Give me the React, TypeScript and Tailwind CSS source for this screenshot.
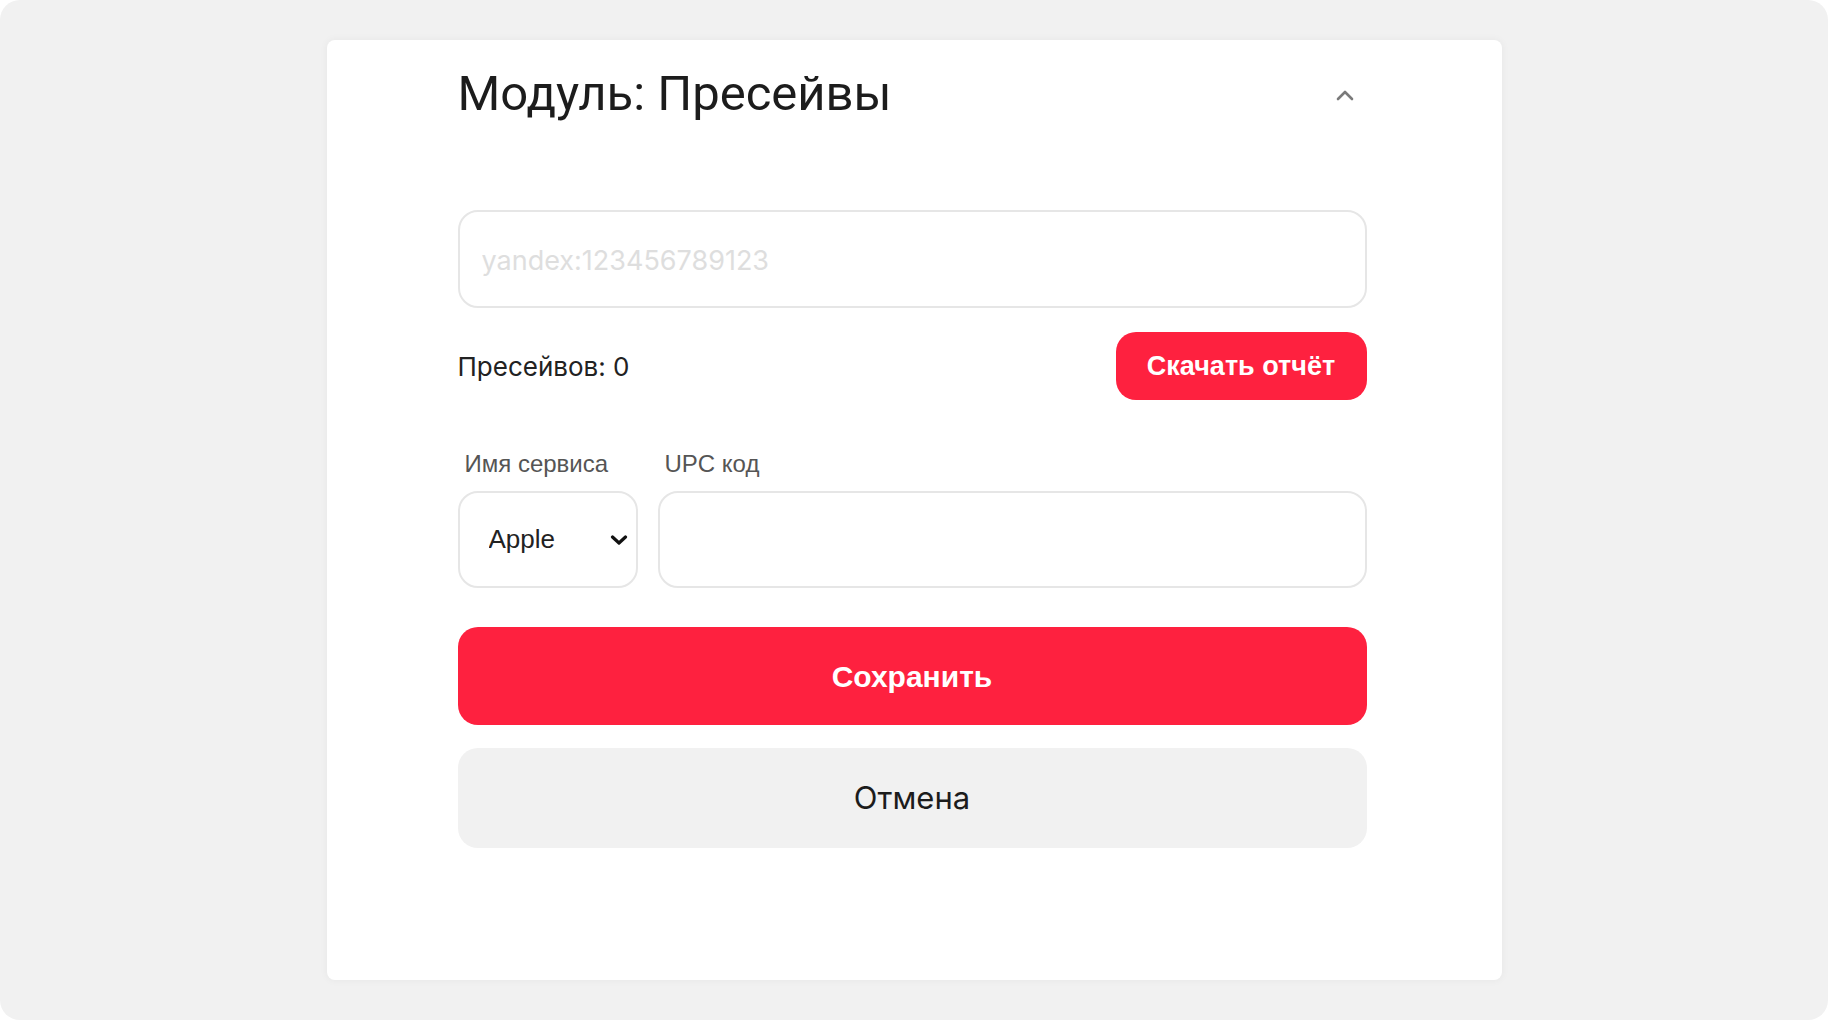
import { useState } from "react";

const inter = "font-['Inter',sans-serif]";
const arial = "font-['Liberation_Sans',Arial,sans-serif]";

export default function App() {
    const [service, setService] = useState("apple");
    const [link, setLink] = useState("");
    const [upc, setUpc] = useState("");

    return (
        <div className="h-[1020px] w-full bg-white">
            <div className="h-full w-full rounded-[20px] bg-[#f1f1f1] pt-[40px]">
                {/* Module card */}
                <div className="mx-auto h-[940px] w-[1175px] rounded-lg bg-white pt-[25px] shadow-[0_0_8px_rgba(0,0,0,0.05)]">
                    <div className="ml-[131px] flex w-[909px] flex-col">
                        <div className="flex items-center justify-between">
                            <h1 className="font-['Roboto',sans-serif] text-[49px] leading-[58px] font-normal text-[#1c1c1c]">
                                Модуль: Пресейвы
                            </h1>
                            <button className="mr-[13px] mt-[2px] text-[#7a7a7a]">
                                <svg width="18" height="12" viewBox="0 0 18 12" fill="none">
                                    <path d="M2 10 L9 3 L16 10" stroke="currentColor" strokeWidth="2.6" strokeLinecap="round" strokeLinejoin="round" />
                                </svg>
                            </button>
                        </div>

                        <input
                            value={link}
                            onChange={(e) => setLink(e.target.value)}
                            placeholder="yandex:123456789123"
                            className={`mt-[87px] h-[98px] w-full rounded-[20px] border-2 border-[#e6e6e6] px-[22px] pt-[3px] text-[27px] text-[#222] outline-none placeholder:text-[#dedede] ${inter}`}
                        />

                        <div className="mt-[24px] flex h-[68px] items-center justify-between">
                            <span className={`text-[26px] text-[#222] ${inter}`}>Пресейвов: 0</span>
                            <button className={`h-[68px] w-[251px] rounded-[20px] bg-[#fe213f] text-[27px] font-bold text-white ${arial}`}>
                                Скачать отчёт
                            </button>
                        </div>

                        <div className="mt-[50px] flex gap-[20px]">
                            <div className="flex w-[180px] flex-col gap-[13px]">
                                <label className={`pl-[7px] text-[24px] leading-[28px] text-[#555] ${arial}`}>Имя сервиса</label>
                                <div className="relative">
                                    <select
                                        value={service}
                                        onChange={(e) => setService(e.target.value)}
                                        className={`h-[97px] w-full appearance-none rounded-[20px] border-2 border-[#e6e6e6] bg-white pl-[29px] text-[26px] text-[#222] outline-none ${arial}`}
                                    >
                                        <option value="apple">Apple</option>
                                        <option value="spotify">Spotify</option>
                                        <option value="yandex">Yandex</option>
                                        <option value="vk">VK</option>
                                    </select>
                                    <svg
                                        className="pointer-events-none absolute right-[10px] top-[44px]"
                                        width="18"
                                        height="10"
                                        viewBox="0 0 18 10"
                                        fill="none"
                                    >
                                        <path d="M2.5 2 L9 8 L15.5 2" stroke="#111" strokeWidth="3.2" strokeLinecap="round" strokeLinejoin="round" />
                                    </svg>
                                </div>
                            </div>
                            <div className="flex flex-1 flex-col gap-[13px]">
                                <label className={`pl-[7px] text-[24px] leading-[28px] text-[#555] ${arial}`}>UPC код</label>
                                <input
                                    value={upc}
                                    onChange={(e) => setUpc(e.target.value)}
                                    className={`h-[97px] w-full rounded-[20px] border-2 border-[#e6e6e6] px-[22px] text-[26px] text-[#222] outline-none ${inter}`}
                                />
                            </div>
                        </div>

                        <button className={`mt-[39px] h-[98px] w-full rounded-[20px] bg-[#fe213f] text-[30px] font-bold text-white ${arial}`}>
                            Сохранить
                        </button>
                        <button className={`mt-[23px] h-[100px] w-full rounded-[20px] bg-[#f1f1f1] text-[31px] text-[#1c1c1c] ${inter}`}>
                            Отмена
                        </button>
                    </div>
                </div>
            </div>
        </div>
    );
}
